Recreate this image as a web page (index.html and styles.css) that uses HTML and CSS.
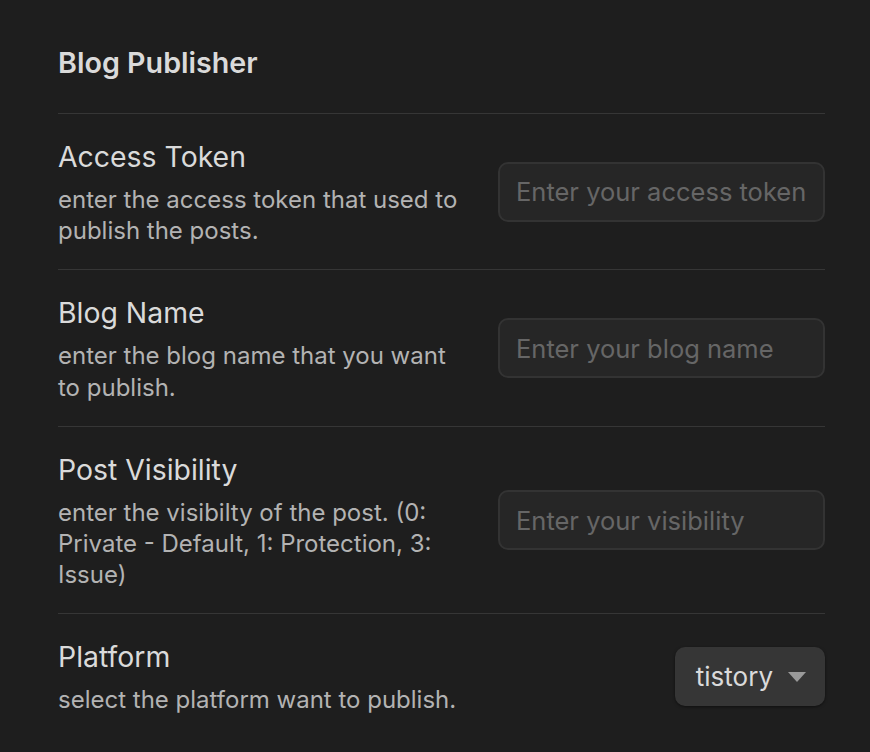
FILE: index.html
```html
<!DOCTYPE html>
<html>
<head>
<meta charset="utf-8">
<link rel="stylesheet" href="styles.css">
</head>
<body>
<div class="settings">
  <h2 class="heading">Blog Publisher</h2>
  <div class="item">
    <div class="info">
      <div class="name">Access Token</div>
      <div class="desc">enter the access token that used to publish the posts.</div>
    </div>
    <div class="control"><input class="text" type="text" placeholder="Enter your access token"></div>
  </div>
  <div class="item">
    <div class="info">
      <div class="name">Blog Name</div>
      <div class="desc">enter the blog name that you want to publish.</div>
    </div>
    <div class="control"><input class="text" type="text" placeholder="Enter your blog name"></div>
  </div>
  <div class="item">
    <div class="info">
      <div class="name">Post Visibility</div>
      <div class="desc">enter the visibilty of the post. (0: Private - Default, 1: Protection, 3: Issue)</div>
    </div>
    <div class="control"><input class="text" type="text" placeholder="Enter your visibility"></div>
  </div>
  <div class="item">
    <div class="info">
      <div class="name">Platform</div>
      <div class="desc">select the platform want to publish.</div>
    </div>
    <div class="control">
      <div class="dropdown"><span>tistory</span><svg class="caret" width="18" height="10" viewBox="0 0 18 10"><path d="M0 0 L18 0 L9 10 Z" fill="#9a9a9a"/></svg></div>
    </div>
  </div>
</div>
</body>
</html>
```
FILE: styles.css
```css
html, body {
  margin: 0;
  background: #1e1e1e;
}
body {
  font-family: Inter, "Noto Sans", sans-serif;
  color: #dadada;
}
.settings {
  padding: 0 45px 0 58px;
}
.heading {
  margin: 0;
  padding: 46px 0 34px;
  font-size: 28.7px;
  line-height: 33px;
  font-weight: 600;
  color: #dadada;
}
.item {
  display: flex;
  align-items: center;
  padding: 23px 0;
  border-top: 1px solid #363636;
}
.info {
  flex: 1 1 auto;
  margin-right: 32px;
}
.name {
  font-size: 28.4px;
  line-height: 39px;
  color: #dadada;
}
.desc {
  padding-top: 8px;
  font-size: 24px;
  line-height: 31.2px;
  color: #b3b3b3;
}
.control {
  flex: 0 0 auto;
}
.text {
  box-sizing: border-box;
  width: 327px;
  height: 60px;
  padding: 0 16px;
  background: #262626;
  border: 2px solid #333333;
  border-radius: 10px;
  font-family: Inter, "Noto Sans", sans-serif;
  font-size: 25.5px;
  color: #dadada;
  outline: none;
}
.text::placeholder {
  color: #666666;
}
.dropdown {
  box-sizing: border-box;
  display: flex;
  align-items: center;
  gap: 15px;
  height: 59px;
  padding: 0 19px 0 21px;
  background: #363636;
  border-radius: 10px;
  box-shadow: 0 1px 3px rgba(0, 0, 0, 0.5);
  font-size: 26px;
  color: #dadada;
}
.caret {
  display: block;
}
```
